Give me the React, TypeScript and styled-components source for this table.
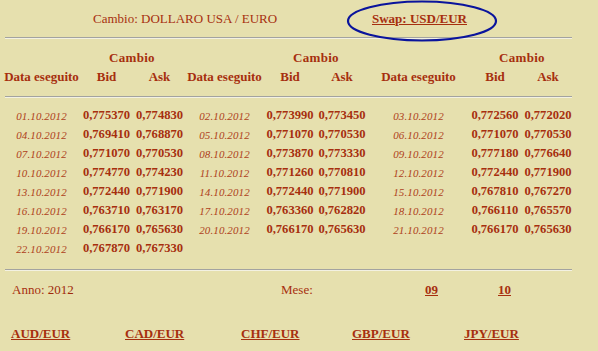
import React from "react";
import styled, { createGlobalStyle } from "styled-components";

const Global = createGlobalStyle`
  html, body { margin: 0; padding: 0; background: #e6e0ae; }
  body { font-family: "Liberation Serif", "Times New Roman", serif; color: #a62f0e; }
`;

const Page = styled.div`
  width: 598px;
  height: 351px;
  background: #e6e0ae;
  overflow: hidden;
`;

const TitleRow = styled.div`
  height: 37px;
  display: flex;
  align-items: center;
  padding-left: 93px;
  font-size: 13px;
  line-height: 19px;
`;

const Title = styled.span`
  width: 279px;
  flex: none;
  white-space: nowrap;
`;

const SwapCell = styled.span`
  position: relative;
  display: block;
  height: 19px;
  line-height: 19px;
`;

const Link = styled.a`
  color: #a62f0e;
  font-weight: bold;
  text-decoration: underline;
  white-space: nowrap;
`;

const Ellipse = styled.svg`
  position: absolute;
  left: calc(50% - 73px);
  top: calc(50% - 19px);
  width: 150px;
  height: 42px;
  overflow: visible;
  pointer-events: none;
`;

const Rule = styled.div`
  margin-left: 5px;
  width: 567px;
  height: 0;
  border-top: 1px solid #a3a3a0;
  border-bottom: 1px solid #f3f1e2;
`;

const Grid = styled.div<{ $top: number }>`
  margin-left: 4px;
  margin-top: ${(p) => p.$top}px;
  display: grid;
  grid-template-columns: 75px 55px 51px 79px 52px 52px 101px 52px 54px;
  grid-auto-rows: 19px;
  align-items: center;
  justify-items: center;
`;

const GroupHead = styled.div<{ $col: number }>`
  grid-column: ${(p) => p.$col} / span 2;
  font-weight: bold;
  font-size: 13px;
  letter-spacing: 0.3px;
  white-space: nowrap;
`;

const Head = styled.div<{ $first?: boolean }>`
  font-weight: bold;
  font-size: 13px;
  white-space: nowrap;
  ${(p) => (p.$first ? "grid-column: 1; grid-row: 2;" : "")}
`;

const Spacer = styled.div<{ $h: number }>`
  height: ${(p) => p.$h}px;
`;

const DateCell = styled.div`
  font-style: italic;
  font-size: 11px;
  color: #ae3f1b;
  white-space: nowrap;
  letter-spacing: 0.1px;
`;

const NumCell = styled.div`
  font-weight: bold;
  font-size: 12.6px;
  white-space: nowrap;
`;

const InfoRow = styled.div`
  margin-top: 9px;
  height: 19px;
  display: grid;
  grid-template-columns: 269px 144px 73px auto;
  align-items: center;
  padding-left: 12px;
  font-size: 13px;
`;

const Label = styled.span`
  white-space: nowrap;
`;

const Strong = styled.span`
  color: #9e2b0b;
`;

const MonthLink = styled(Link)`
  justify-self: start;
`;

const LinksRow = styled.div`
  margin-top: 25px;
  height: 19px;
  display: grid;
  grid-template-columns: 114px 116px 111px 112px auto;
  align-items: center;
  padding-left: 11px;
  font-size: 13px;
`;

const groups: [string, string, string][][] = [
  [
    ["01.10.2012", "0,775370", "0,774830"],
    ["04.10.2012", "0,769410", "0,768870"],
    ["07.10.2012", "0,771070", "0,770530"],
    ["10.10.2012", "0,774770", "0,774230"],
    ["13.10.2012", "0,772440", "0,771900"],
    ["16.10.2012", "0,763710", "0,763170"],
    ["19.10.2012", "0,766170", "0,765630"],
    ["22.10.2012", "0,767870", "0,767330"],
  ],
  [
    ["02.10.2012", "0,773990", "0,773450"],
    ["05.10.2012", "0,771070", "0,770530"],
    ["08.10.2012", "0,773870", "0,773330"],
    ["11.10.2012", "0,771260", "0,770810"],
    ["14.10.2012", "0,772440", "0,771900"],
    ["17.10.2012", "0,763360", "0,762820"],
    ["20.10.2012", "0,766170", "0,765630"],
  ],
  [
    ["03.10.2012", "0,772560", "0,772020"],
    ["06.10.2012", "0,771070", "0,770530"],
    ["09.10.2012", "0,777180", "0,776640"],
    ["12.10.2012", "0,772440", "0,771900"],
    ["15.10.2012", "0,767810", "0,767270"],
    ["18.10.2012", "0,766110", "0,765570"],
    ["21.10.2012", "0,766170", "0,765630"],
  ],
];

export default function App() {
  const rows: React.ReactNode[] = [];
  for (let r = 0; r < 8; r++) {
    for (let g = 0; g < 3; g++) {
      const d = groups[g][r];
      if (d) {
        rows.push(<DateCell key={`d${r}${g}`}>{d[0]}</DateCell>);
        rows.push(<NumCell key={`b${r}${g}`}>{d[1]}</NumCell>);
        rows.push(<NumCell key={`a${r}${g}`}>{d[2]}</NumCell>);
      }
    }
  }
  return (
    <Page>
      <Global />
      <TitleRow>
        <Title>Cambio: DOLLARO USA / EURO</Title>
        <SwapCell>
          <Link href="#">Swap: USD/EUR</Link>
          <Ellipse viewBox="0 0 150 42">
            <ellipse cx="75" cy="21" rx="74" ry="19.5" fill="none" stroke="#0a149c" strokeWidth="2.2" />
          </Ellipse>
        </SwapCell>
      </TitleRow>
      <Rule />
      <Grid $top={9}>
        <GroupHead $col={2}>Cambio</GroupHead>
        <GroupHead $col={5}>Cambio</GroupHead>
        <GroupHead $col={8}>Cambio</GroupHead>
        <Head $first>Data eseguito</Head>
        <Head>Bid</Head>
        <Head>Ask</Head>
        <Head>Data eseguito</Head>
        <Head>Bid</Head>
        <Head>Ask</Head>
        <Head>Data eseguito</Head>
        <Head>Bid</Head>
        <Head>Ask</Head>
      </Grid>
      <Spacer $h={10} />
      <Rule />
      <Grid $top={8}>{rows}</Grid>
      <Spacer $h={11} />
      <Rule />
      <InfoRow>
        <Label>
          Anno: <Strong>2012</Strong>
        </Label>
        <Label>Mese:</Label>
        <MonthLink href="#">09</MonthLink>
        <MonthLink href="#">10</MonthLink>
      </InfoRow>
      <LinksRow>
        <Link href="#">AUD/EUR</Link>
        <Link href="#">CAD/EUR</Link>
        <Link href="#">CHF/EUR</Link>
        <Link href="#">GBP/EUR</Link>
        <Link href="#">JPY/EUR</Link>
      </LinksRow>
    </Page>
  );
}
